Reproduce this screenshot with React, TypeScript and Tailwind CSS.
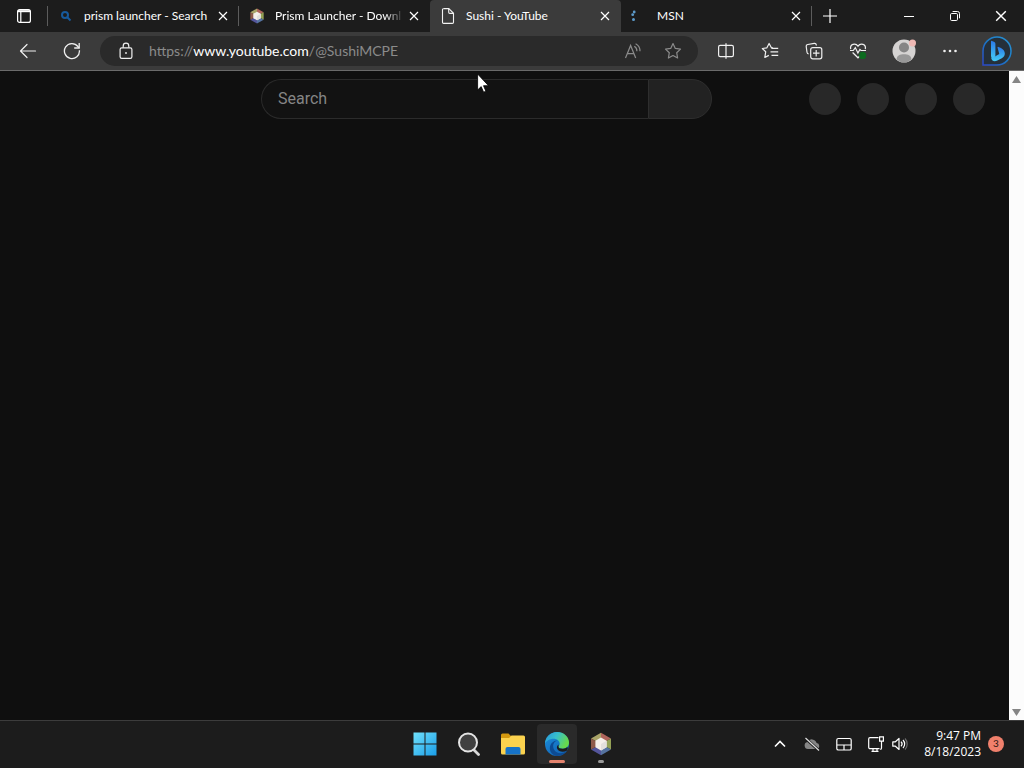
import type { ReactNode } from "react";

const uiFont = "font-['Lato','Open_Sans',sans-serif]";

/* Tab icons */

function SearchFavicon() {
  return (
    <svg className="size-4" viewBox="0 0 16 16" fill="none" stroke="#175a9c" strokeWidth="2">
      <circle cx="7" cy="7" r="3" />
      <path d="M9.3 9.3 12.5 12.5" />
    </svg>
  );
}

function PrismIcon({ className }: { className: string }) {
  return (
    <svg className={className} viewBox="0 0 24 24">
      <path d="M12 .8 22 6.5 12 12Z" fill="#b0655c" />
      <path d="M12 .8 2 6.5 12 12Z" fill="#a9a468" />
      <path d="M22 6.5v11L12 12Z" fill="#93a055" />
      <path d="M22 17.5 12 23.2V12Z" fill="#5673a0" />
      <path d="M12 23.2 2 17.5 12 12Z" fill="#54559b" />
      <path d="M2 17.5v-11L12 12Z" fill="#8f5a4a" />
      <path d="M12 5.6 17.6 8.8v6.4L12 18.400l-5.600-3.200V8.800Z" fill="#f5efea" />
      <path d="M12 12 17.600 8.800v6.400L12 18.400Z" fill="#e3dfdc" />
    </svg>
  );
}

function PageIcon() {
  return (
    <svg className="size-4" viewBox="0 0 16 16" fill="none" stroke="#f2f2f2" strokeWidth="1.1">
      <path d="M3.5.6h5.3l4.7 4.7v9a1.1 1.1 0 0 1-1.1 1.1H3.6a1.1 1.1 0 0 1-1.1-1.1V1.7A1.1 1.1 0 0 1 3.6.6Z" />
      <path d="M8.7.8v3.5a1.1 1.1 0 0 0 1.1 1.1h3.5" />
    </svg>
  );
}

function LoadingIcon() {
  return (
    <svg className="size-4" viewBox="0 0 16 16" fill="#5d9ac9">
      <circle cx="3.2" cy="4" r="1.4" />
      <circle cx="1.7" cy="6.700" r="1.400" />
      <circle cx="2.500" cy="11.600" r="1.500" />
    </svg>
  );
}

function CloseIcon({ className }: { className: string }) {
  return (
    <svg className={className} viewBox="0 0 10 10" fill="none" stroke="currentColor" strokeWidth="1.2">
      <path d="M1 1 9 9M9 1 1 9" />
    </svg>
  );
}

const tabs = [
  { title: "prism launcher - Search", icon: <SearchFavicon />, active: false },
  { title: "Prism Launcher - Downl", icon: <PrismIcon className="size-4" />, active: false },
  { title: "Sushi - YouTube", icon: <PageIcon />, active: true },
  { title: "MSN", icon: <LoadingIcon />, active: false },
];

function TabBar() {
  return (
    <div className="flex h-8 bg-[#1c1c1c] text-white">
      <button aria-label="Tab actions" className="flex w-12 shrink-0 items-center justify-center">
        <svg className="size-4" viewBox="0 0 16 16" fill="none" stroke="currentColor" strokeWidth="1.2">
          <rect x="1.6" y="1.6" width="12.8" height="12.8" rx="2" />
          <path d="M2 3.200h12" strokeWidth="2" />
          <path d="M4.800 4v10.400" />
        </svg>
      </button>
      {tabs.map((tab, i) => (
        <div
          key={tab.title}
          className={`relative flex w-[191px] min-w-0 items-center pl-[10px] pr-1.5 ${
            tab.active ? "rounded-t-sm bg-[#3b3b3b]" : ""
          }`}
        >
          {i < 2 && <span className="absolute left-0 top-1.5 h-5 w-px -translate-x-px bg-[#5c5c5c]" />}
          {tab.icon}
          <button
            className={`ml-[10px] min-w-0 flex-1 overflow-hidden text-left text-xs whitespace-nowrap ${
              i === 1 ? "mask-r-from-85%" : ""
            }`}
          >
            {tab.title}
          </button>
          <button aria-label={`Close ${tab.title}`} className="flex size-5 items-center justify-center">
            <CloseIcon className="size-[10px]" />
          </button>
        </div>
      ))}
      <button aria-label="New tab" className="relative flex w-9 items-center justify-center">
        <span className="absolute left-0 top-1.5 h-5 w-px -translate-x-px bg-[#5c5c5c]" />
        <svg className="size-[14px]" viewBox="0 0 14 14" stroke="currentColor" strokeWidth="1.2">
          <path d="M7 0v14M0 7h14" />
        </svg>
      </button>
      <div className="ml-auto flex">
        <button aria-label="Minimize" className="flex w-[46px] items-center justify-center">
          <svg className="size-[10px]" viewBox="0 0 10 10" stroke="currentColor">
            <path d="M0 5.5h10" />
          </svg>
        </button>
        <button aria-label="Restore" className="flex w-[46px] items-center justify-center">
          <svg className="size-[10px]" viewBox="0 0 10 10" fill="none" stroke="currentColor">
            <rect x=".5" y="2.5" width="7" height="7" rx="1.2" />
            <path d="M2.6.5h4.9a2 2 0 0 1 2 2v4.8" />
          </svg>
        </button>
        <button aria-label="Close window" className="flex w-[46px] items-center justify-center">
          <CloseIcon className="size-3" />
        </button>
      </div>
    </div>
  );
}

function ToolButton({ label, className = "w-11", children }: { label: string; className?: string; children: ReactNode }) {
  return (
    <button aria-label={label} className={`flex h-full shrink-0 items-center justify-center ${className}`}>
      {children}
    </button>
  );
}

const starPath = "m9 1.6 2.3 4.8 5.2.7-3.8 3.6.9 5.3L9 13.5 4.4 16l.9-5.3L1.5 7.1l5.2-.7Z";

function Toolbar() {
  return (
    <div className="flex h-[39px] items-center border-b border-[#6a6a6a] bg-[#3b3b3b] pr-3 pl-1.5 text-[#f0f0f0]">
      <ToolButton label="Back">
        <svg className="size-[18px]" viewBox="0 0 18 18" fill="none" stroke="currentColor" strokeWidth="1.2">
          <path d="M16.500 9H1.600M8 2.500 1.500 9 8 15.500" strokeLinecap="round" strokeLinejoin="round" />
        </svg>
      </ToolButton>
      <ToolButton label="Refresh">
        <svg className="size-[18px]" viewBox="0 0 18 18" fill="none" stroke="currentColor" strokeWidth="1.3">
          <path d="M16.4 8.3A7.5 7.5 0 1 1 14.9 4.5L16 5.8" />
          <path d="M16.2 1v5h-5" />
        </svg>
      </ToolButton>

      {/* Address bar */}
      <div className="mx-1.5 flex h-[30px] flex-1 items-center rounded-full bg-[#2a2a2a] pr-4">
        <button aria-label="Site information" className="ml-[17px] flex w-[18px] justify-center">
          <svg className="size-[18px]" viewBox="0 0 18 18" fill="none" stroke="currentColor" strokeWidth="1.2">
            <rect x="3.1" y="5.8" width="11.8" height="10.6" rx="1.6" />
            <path d="M6.2 5.8V4a2.8 2.8 0 0 1 5.6 0v1.8" />
            <circle cx="9" cy="11" r=".9" fill="currentColor" stroke="none" />
          </svg>
        </button>
        <a href="#" className="ml-3.5 flex-1 truncate text-sm text-[#8b8b8b]">
          https://<span className="text-white">www.youtube.com</span>/@SushiMCPE
        </a>
        <button aria-label="Read aloud" className="text-[#8b8b8b]">
          <svg className="size-[18px]" viewBox="0 0 18 18" fill="none" stroke="currentColor" strokeWidth="1.2">
            <path d="M1.5 16 6.6 3.4 11.7 16M3.3 11.6h6.6" />
            <path d="M10.3 4.3a5.5 5.5 0 0 1 2.6 5M11.6 1.8a8.3 8.3 0 0 1 4.4 7.5" />
          </svg>
        </button>
        <button aria-label="Add to favorites" className="ml-[22px] text-[#8b8b8b]">
          <svg className="size-[18px]" viewBox="0 0 18 18" fill="none" stroke="currentColor" strokeWidth="1.2">
            <path d={starPath} strokeLinejoin="round" />
          </svg>
        </button>
      </div>

      <ToolButton label="Split screen">
        <svg className="size-[18px]" viewBox="0 0 18 18" fill="none" stroke="currentColor" strokeWidth="1.2">
          <path d="M7 3.4H3.2a1.6 1.6 0 0 0-1.6 1.6v8a1.6 1.6 0 0 0 1.6 1.6H7M11 3.4h3.8A1.6 1.6 0 0 1 16.4 5v8a1.6 1.6 0 0 1-1.6 1.6H11M7 3.4h4M7 14.6h4M9 1.2v15.6" />
        </svg>
      </ToolButton>
      <ToolButton label="Favorites">
        <svg className="size-[18px]" viewBox="0 0 18 18" fill="none" stroke="currentColor" strokeWidth="1.2">
          <path d="M12 6 10.400 5.700 8.100 1.500 5.900 5.800l-4.600.7 3.400 3.300-.9 5.700 4-2.100" strokeLinejoin="round" />
          <path d="M10.500 6.300h6.700M9.500 9.800h7.700M10.500 13.300h6.700" />
        </svg>
      </ToolButton>
      <ToolButton label="Collections">
        <svg className="size-[18px]" viewBox="0 0 18 18" fill="none" stroke="currentColor" strokeWidth="1.2">
          <path d="M3.6 11.8A1.8 1.8 0 0 1 2 10.2L1.2 4.5a1.8 1.8 0 0 1 1.5-2L9.3 1.4a1.8 1.8 0 0 1 2 1.5l.1.6" />
          <rect x="5.7" y="5.7" width="11.1" height="11.1" rx="2" />
          <path d="M11.2 8v6.5M8 11.2h6.5" />
        </svg>
      </ToolButton>
      <ToolButton label="Browser essentials">
        <svg className="size-[18px]" viewBox="0 0 18 18" fill="none" stroke="currentColor" strokeWidth="1.2">
          <path d="M1.7 7.2C.6 2.2 6.4.4 9 4.1 11.6.4 17.400 2.200 16.300 7.200M3.600 10.500 9 15.800 12 12.900" />
          <path d="M1 8.500h3.300L6.300 5.600 8.900 11l2-3.600 1.100 1.100h5" />
          <circle cx="13.600" cy="13.400" r="3.600" fill="#0d6b20" stroke="none" />
        </svg>
      </ToolButton>
      <ToolButton label="Profile" className="w-12">
        <svg className="size-6" viewBox="0 0 24 24">
          <circle cx="12" cy="12" r="11.500" fill="#d5d3d2" />
          <circle cx="12" cy="8.500" r="5" fill="#858585" />
          <path d="M4.500 20.500C5 16 8 15.200 12 15.200s7 .8 7.500 5.300a11.400 11.400 0 0 1-15 0Z" fill="#989898" />
          <circle cx="20.500" cy="4" r="3.500" fill="#efb9b4" />
        </svg>
      </ToolButton>
      <ToolButton label="Settings and more">
        <svg className="size-[18px]" viewBox="0 0 18 18" fill="currentColor">
          <circle cx="3.500" cy="9" r="1.300" />
          <circle cx="9" cy="9" r="1.300" />
          <circle cx="14.500" cy="9" r="1.300" />
        </svg>
      </ToolButton>
      <ToolButton label="Bing chat" className="ml-2.5">
        <svg className="size-[30px]" viewBox="0 0 30 30" fill="none">
          <defs>
            <linearGradient id="bubble" x1="0" y1="1" x2="1" y2="0">
              <stop offset="0" stopColor="#2c48c8" />
              <stop offset="0.5" stopColor="#1b77c4" />
              <stop offset="1" stopColor="#2996d8" />
            </linearGradient>
            <linearGradient id="bing" x1="0" y1="0" x2="0" y2="1">
              <stop offset="0" stopColor="#2a78e8" />
              <stop offset="1" stopColor="#45cdf5" />
            </linearGradient>
          </defs>
          <path d="M15 1a14 14 0 1 1 0 28H1V15A14 14 0 0 1 15 1Z" fill="#25303a" stroke="url(#bubble)" strokeWidth="1.500" />
          <path d="M9 5.500q0-1 1-.6l2.400 1.200q1 .5 1 1.600v12L11.500 24Q9 23 9 20Z" fill="url(#bing)" />
          <path d="M15.500 11.500q0-1 1-.6c3.500 1.300 6.300 3 6.300 6.600 0 2.200-1 3.500-3 4.700l-5 2.600c-2.800 1.200-5-.2-5.500-2.300l8-4.500Z" fill="url(#bing)" />
        </svg>
      </ToolButton>
    </div>
  );
}

function Page() {
  return (
    <div className="relative flex flex-1 bg-[#0f0f0f]">
      <main className="min-w-0 flex-1">
        <header className="grid h-14 grid-cols-[261px_minmax(0,451px)_1fr] items-center pr-6 font-[Roboto,sans-serif]">
          <form className="col-start-2 flex h-10">
            <input
              type="text"
              aria-label="Search"
              placeholder="Search"
              className="min-w-0 flex-1 rounded-l-full border border-r-0 border-[#2b2b2b] bg-[#121212] px-4 text-base text-white placeholder:text-[#858585]"
            />
            <button type="button" aria-label="Submit search" className="w-16 rounded-r-full border border-[#2e2e2e] bg-[#222222]" />
          </form>
          <div className="flex justify-end gap-4">
            {["Create", "Apps", "Notifications", "Account"].map((name) => (
              <button key={name} aria-label={name} className="size-8 rounded-full bg-[#282828]" />
            ))}
          </div>
        </header>
      </main>

      {/* Scrollbar */}
      <div className="flex w-[15px] flex-col items-center justify-between bg-[#fcfcfc] pt-[5px] pb-1">
        <svg className="h-[7px] w-[9px]" viewBox="0 0 9 7" fill="#858585">
          <path d="M4.500 0 9 7H0Z" />
        </svg>
        <svg className="h-[7px] w-[9px]" viewBox="0 0 9 7" fill="#858585">
          <path d="M0 0h9L4.500 7Z" />
        </svg>
      </div>

      {/* Mouse pointer */}
      <svg className="absolute top-0.5 left-[477px] h-5 w-3" viewBox="0 0 12 20" fill="#fff" stroke="#000" strokeWidth=".8">
        <path d="M.6 1v16l3.600-3.400 2.400 5.600 2.300-1-2.400-5.500h5Z" />
      </svg>
    </div>
  );
}

/* Taskbar icons */

function StartIcon() {
  return (
    <svg className="size-6" viewBox="0 0 24 24">
      <defs>
        <linearGradient id="start" gradientUnits="userSpaceOnUse" x1="0" y1="0" x2="24" y2="24">
          <stop offset="0" stopColor="#72e2fb" />
          <stop offset="1" stopColor="#189ce8" />
        </linearGradient>
      </defs>
      <path d="M.5.5h11v11H.5ZM12.500.5h11v11h-11ZM.5 12.500h11v11H.5ZM12.500 12.500h11v11h-11Z" fill="url(#start)" />
    </svg>
  );
}

function SearchIcon() {
  return (
    <svg className="size-6" viewBox="0 0 24 24" fill="none">
      <path d="m16.500 17.500 5 5" stroke="#d8d8d8" strokeWidth="2.800" strokeLinecap="round" />
      <circle cx="11" cy="10.500" r="9" fill="#404040" stroke="#e4e4e4" strokeWidth="2" />
    </svg>
  );
}

function FolderIcon() {
  return (
    <svg className="size-6" viewBox="0 0 24 24">
      <path d="M0 3a1.500 1.500 0 0 1 1.500-1.500h6L10 4v4H0Z" fill="#d4980f" />
      <path d="M0 6h8l2.500-2.500h12A1.500 1.500 0 0 1 24 5v16a1.500 1.500 0 0 1-1.500 1.500h-21A1.500 1.500 0 0 1 0 21Z" fill="#fbd24e" />
      <path d="M4.500 22.500V17A2 2 0 0 1 6.500 15h11a2 2 0 0 1 2 2v5.500Z" fill="#1673c8" />
    </svg>
  );
}

function EdgeIcon() {
  return (
    <svg className="size-6" viewBox="0 0 24 24">
      <defs>
        <linearGradient id="edgeTop" x1="0" y1="0" x2="1" y2="0.400">
          <stop offset="0" stopColor="#2795dd" />
          <stop offset="0.500" stopColor="#37bfcb" />
          <stop offset="1" stopColor="#67d84c" />
        </linearGradient>
        <linearGradient id="edgeBody" x1="0" y1="0" x2="0.700" y2="1">
          <stop offset="0" stopColor="#1b90dd" />
          <stop offset="1" stopColor="#1263b4" />
        </linearGradient>
      </defs>
      <circle cx="12" cy="12" r="12" fill="url(#edgeBody)" />
      <path d="M12.500 8.500c-4 1-5.500 5-3.500 9 2.500 4.500 8 5 12.800 1.600A12 12 0 0 1 12 24C6 23 3.500 17.500 5.500 13c1.300-3 4-4.500 7-4.500Z" fill="#0d4b93" />
      <path d="M0 12C0 5 5.500 0 12 0c7 0 12 5 12 10.500 0 4-3 6.200-6.200 6.200-3 0-4.300-1-4.300-2 0-.8 1.200-1.300 1.200-3C14.700 9 12 6.800 8.600 6.800 4.500 6.800 1 9 0 12Z" fill="url(#edgeTop)" />
      <path d="M13.500 14.700c0 1 1.300 2 4.300 2a6.500 6.500 0 0 0 4.600-1.700q1 1.300-.3 3.500c-3.500 2-8 1.500-9.800-1.500-.9-1.500-.2-3.500 1.200-4.500Z" fill="#1c1c1c" />
    </svg>
  );
}

const apps = [
  { name: "Start", icon: <StartIcon />, mark: "" },
  { name: "Search", icon: <SearchIcon />, mark: "" },
  { name: "File Explorer", icon: <FolderIcon />, mark: "" },
  { name: "Microsoft Edge", icon: <EdgeIcon />, mark: "w-4 bg-[#e5846f]" },
  { name: "Prism Launcher", icon: <PrismIcon className="size-6" />, mark: "w-1.5 bg-[#9a9a9a]" },
];

function Taskbar() {
  return (
    <footer className="grid h-12 grid-cols-[1fr_auto_1fr] items-center border-t border-[#3c3c3c] bg-[#1c1c1c] pb-0.5 pl-0.5 text-white">
      <nav className="col-start-2 flex gap-1">
        {apps.map((app) => (
          <button
            key={app.name}
            aria-label={app.name}
            className={`relative flex size-10 items-center justify-center rounded ${
              app.name === "Microsoft Edge" ? "bg-[#2a2a2a]" : ""
            }`}
          >
            {app.icon}
            {app.mark && <span className={`absolute bottom-px h-[3px] rounded-full ${app.mark}`} />}
          </button>
        ))}
      </nav>

      {/* System tray */}
      <div className="flex items-center justify-end pr-5">
        <button aria-label="Show hidden icons" className="flex w-8 justify-center">
          <svg className="size-4" viewBox="0 0 16 16" fill="none" stroke="currentColor" strokeWidth="1.600">
            <path d="M3 10.500 8 5.500l5 5" />
          </svg>
        </button>
        <button aria-label="OneDrive" className="flex w-8 justify-center">
          <svg className="size-4" viewBox="0 0 16 16">
            <path d="M4 13a3.600 3.600 0 0 1-.6-7.100 5 5 0 0 1 9.200 1.200A3 3 0 0 1 13 13Z" fill="#858585" />
            <path d="M1 2 15 14.500" stroke="#1c1c1c" strokeWidth="3" />
            <path d="M1.500 2 15 14.500" stroke="#dedede" strokeWidth="1.200" />
          </svg>
        </button>
        <button aria-label="Virtual touchpad" className="flex w-8 justify-center">
          <svg className="size-4" viewBox="0 0 16 16" fill="none" stroke="currentColor" strokeWidth="1.200">
            <rect x=".8" y="2.500" width="14.400" height="11.500" rx="1.600" />
            <path d="M1 9h14M8 9v5" />
          </svg>
        </button>
        <button aria-label="Network" className="flex w-8 justify-center">
          <svg className="size-4" viewBox="0 0 16 16" fill="none" stroke="currentColor" strokeWidth="1.200">
            <path d="M10.500 1.600H2A1.300 1.300 0 0 0 .7 2.900v8.400A1.300 1.300 0 0 0 2 12.600h9.500M5 12.600v2.700M9 12.600v2.700M3.500 15.400h7" />
            <path d="M11.600.8h3.800v4.400h-3.800ZM13.500 5.200V12a1.300 1.300 0 0 1-1.300 1.300" />
          </svg>
        </button>
        <button aria-label="Volume" className="flex w-4 justify-center">
          <svg className="size-4" viewBox="0 0 16 16" fill="none" stroke="currentColor" strokeWidth="1.200">
            <path d="M.8 5.800h2.600L7 2.500v11l-3.600-3.300H.8Z" strokeLinejoin="round" />
            <path d="M9 5.700a3.300 3.300 0 0 1 0 4.600M11 4a5.700 5.700 0 0 1 0 8" />
            <path d="M13 2.500a8 8 0 0 1 0 11" stroke="#6a6a6a" />
          </svg>
        </button>
        <button className="ml-4 text-right font-['Open_Sans',sans-serif] text-xs leading-4">
          9:47 PM
          <br />
          8/18/2023
        </button>
        <button
          aria-label="3 notifications"
          className="ml-[7px] flex size-4 items-center justify-center rounded-full bg-[#f0806c] text-[10px] text-[#2b1512]"
        >
          3
        </button>
      </div>
    </footer>
  );
}

function App() {
  return (
    <div className={`flex min-h-screen flex-col bg-[#0f0f0f] ${uiFont}`}>
      <TabBar />
      <Toolbar />
      <Page />
      <Taskbar />
    </div>
  );
}

export default App;
